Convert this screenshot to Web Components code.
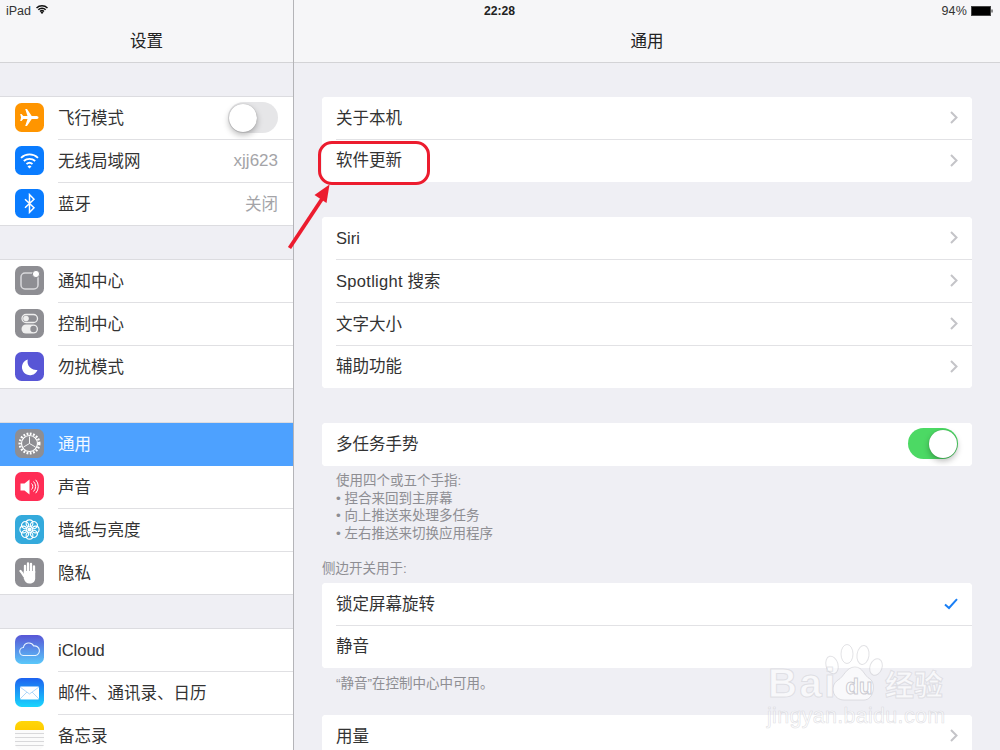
<!DOCTYPE html>
<html lang="zh"><head><meta charset="utf-8"><title>设置</title>
<style>
html,body{margin:0;padding:0;background:#efeff4}
body{width:1000px;height:750px;overflow:hidden;font-family:"Liberation Sans","Noto Sans CJK SC",sans-serif;color:#2b2b2b}
</style></head><body>
<settings-app>
  <nav-pane slot="side" title-text="设置" side>
    <set-group>
      <set-row side><set-icon slot="icon" name="plane"></set-icon>飞行模式<ios-switch slot="end"></ios-switch></set-row>
      <set-row side><set-icon slot="icon" name="wifi"></set-icon>无线局域网<span slot="end" style="font-size:17px">xjj623</span></set-row>
      <set-row side><set-icon slot="icon" name="bt"></set-icon>蓝牙<span slot="end">关闭</span></set-row>
    </set-group>
    <set-group>
      <set-row side><set-icon slot="icon" name="notif"></set-icon>通知中心</set-row>
      <set-row side><set-icon slot="icon" name="control"></set-icon>控制中心</set-row>
      <set-row side><set-icon slot="icon" name="moon"></set-icon>勿扰模式</set-row>
    </set-group>
    <set-group>
      <set-row side selected><set-icon slot="icon" name="gear"></set-icon>通用</set-row>
      <set-row side><set-icon slot="icon" name="sound"></set-icon>声音</set-row>
      <set-row side><set-icon slot="icon" name="flower"></set-icon>墙纸与亮度</set-row>
      <set-row side><set-icon slot="icon" name="hand"></set-icon>隐私</set-row>
    </set-group>
    <set-group>
      <set-row side><set-icon slot="icon" name="cloud"></set-icon>iCloud</set-row>
      <set-row side><set-icon slot="icon" name="mail"></set-icon>邮件、通讯录、日历</set-row>
      <set-row side><set-icon slot="icon" name="notes"></set-icon>备忘录</set-row>
    </set-group>
  </nav-pane>
  <nav-pane slot="main" title-text="通用">
    <set-card>
      <set-row chevron>关于本机</set-row>
      <set-row chevron>软件更新</set-row>
    </set-card>
    <set-card>
      <set-row chevron>Siri</set-row>
      <set-row chevron><span style="letter-spacing:.3px">Spotlight</span> 搜索</set-row>
      <set-row chevron>文字大小</set-row>
      <set-row chevron>辅助功能</set-row>
    </set-card>
    <set-card>
      <set-row>多任务手势<ios-switch slot="end" on></ios-switch></set-row>
    </set-card>
    <set-note>使用四个或五个手指:<br>• 捏合来回到主屏幕<br>• 向上推送来处理多任务<br>• 左右推送来切换应用程序</set-note>
    <set-note header>侧边开关用于:</set-note>
    <set-card>
      <set-row>锁定屏幕旋转<svg slot="end" width="14" height="12" viewBox="0 0 14 12" style="display:block"><path d="M1 6.500 L5 10 L13 1.200" fill="none" stroke="#1a7ff5" stroke-width="2"/></svg></set-row>
      <set-row>静音</set-row>
    </set-card>
    <set-note class="foot">“静音”在控制中心中可用。</set-note>
    <set-card tail>
      <set-row chevron>用量</set-row>
    </set-card>
  </nav-pane>
</settings-app>
<script>
const def=(n,html,init)=>{customElements.define(n,class extends HTMLElement{
  constructor(){super();this.attachShadow({mode:'open'}).innerHTML=typeof html==='function'?html(this):html;}
  connectedCallback(){init&&init(this)}
})};
def('settings-app',`<style>
:host{display:block;position:relative;width:1000px;height:750px;overflow:hidden}
.wrap{display:grid;grid-template-columns:294px 706px;height:750px}
</style>
<div class="wrap"><slot name="side"></slot><slot name="main"></slot></div>
<status-bar></status-bar><red-annotation></red-annotation><baidu-mark></baidu-mark>`);
def('status-bar',`<style>
:host{position:absolute;left:0;top:0;width:1000px;height:21px;display:grid;grid-template-columns:1fr auto 1fr;align-items:center;box-sizing:border-box;padding:0 7px 0 6px;font:12.500px "Liberation Sans",sans-serif;color:#333}
.l,.r{display:flex;align-items:center}.l{gap:5px}.r{justify-content:flex-end;gap:4px}
b{font-weight:700;color:#222;font-size:12.200px}
.r span{letter-spacing:.2px}
.l svg{position:relative;top:-1px}
</style>
<div class="l"><span>iPad</span><svg width="12" height="9" viewBox="0 0 12 9"><path d="M.5 3A8 8 0 0 1 11.500 3M2.300 4.800a5.500 5.500 0 0 1 7.400 0M4 6.500a3 3 0 0 1 4 0" fill="none" stroke="#111" stroke-width="1.500"/><path d="M6 9 4.500 7.600a2 2 0 0 1 3 0z" fill="#111"/></svg></div>
<b>22:28</b>
<div class="r"><span>94%</span><svg width="22" height="10" viewBox="0 0 22 10"><rect x=".5" y=".5" width="19" height="9" fill="none" stroke="#444"/><rect x="1" y="1" width="18" height="8" fill="#000"/><path d="M20.500 3.500h1v3h-1z" fill="#222"/></svg></div>`);
def('nav-pane',h=>`<style>
:host{display:block;height:750px;overflow:hidden;background:#efeff4}
:host([side]){border-right:1px solid #b4b4b8;box-sizing:border-box;width:294px}
header{height:63px;box-sizing:border-box;border-bottom:1px solid #d3d3d6;background:#f6f6f8;padding:20px 0 2px;display:flex;align-items:center;justify-content:center;font:16.500px "Noto Sans CJK SC",sans-serif;color:#222}
.b{display:flex;flex-direction:column;gap:33px;padding-top:33px}
:host(:not([side])) .b{display:block;padding:34px 28px 0}
</style><header>${h.getAttribute('title-text')}</header><div class="b"><slot></slot></div>`);
def('set-group',`<style>:host{display:block;background:#fff;border-top:1px solid #dcdce0}</style><slot></slot>`);
def('set-card',`<style>:host{display:block;background:#fff;border-radius:4px;overflow:hidden;margin-bottom:35px}
::slotted(set-row:last-child){height:42px}
::slotted(set-row:first-child:last-child){height:43px}
</style><slot></slot>`);
def('set-row',h=>`<style>
:host{display:flex;align-items:center;height:43px;box-sizing:border-box;position:relative;padding:0 14px 2px;background:#fff;font:16.500px/20px "Liberation Sans","Noto Sans CJK SC",sans-serif;color:#333}
:host([side]){padding:0 15px 2px}
:host([selected]){background:#4da1ff;color:#f4f9ff}
:host::after{content:"";position:absolute;left:14px;right:0;bottom:0;height:1px;background:#e2e2e5}
:host([side])::after{left:58px;background:#e0e0e3}
:host(:last-child)::after{display:none}
:host([side]:last-child)::after{display:block;left:0;background:#dcdce0}
:host([selected])::after{display:none}
.ic{display:flex;margin-right:14px}
:host(:not([side])) .ic{display:none}
.lab{flex:1;white-space:nowrap}
.e{color:#a4a4a8;display:flex;align-items:center}
svg.ch{display:${h.hasAttribute('chevron')?'block':'none'}}
</style><div class="ic"><slot name="icon"></slot></div><div class="lab"><slot></slot></div><div class="e"><slot name="end"></slot></div>
<svg class="ch" width="8" height="13" viewBox="0 0 8 13"><path d="M1 1l5.500 5.500L1 12" fill="none" stroke="#c4c4c8" stroke-width="2"/></svg>`);
def('set-note',h=>`<style>
:host{display:block;font:13.500px/17.600px "Liberation Sans","Noto Sans CJK SC",sans-serif;color:#8e8e93;padding:0 14px;margin:-29px 0 27px}
:host(.foot){margin:-28px 0 22px}
:host([header]){padding:0;margin:-9px 0 5.500px}
</style><slot></slot>`);
def('ios-switch',h=>`<style>
:host{display:block;width:50px;height:31px;border-radius:16px;position:relative;background:${h.hasAttribute('on')?'#4cd964':'#e6e6e8'}}
i{position:absolute;top:1.500px;width:28px;height:28px;border-radius:50%;background:#fff;box-shadow:0 3px 6px rgba(0,0,0,.28),0 0 1px rgba(0,0,0,.3);${h.hasAttribute('on')?'right:1px':'left:1px'}}
</style><i></i>`);
const I={
plane:['#ff9500',`<path d="M23.500 14.500c0-1-1.200-1.500-2.500-1.500h-4.300L12 6h-1.800l2.300 7H8.300L6.500 11H5.200l.9 3.500-.9 3.500h1.300l1.800-2h4.200l-2.300 7H12l4.700-7H21c1.300 0 2.500-.5 2.500-1.500z" fill="#fff"/>`],
wifi:['#0a7cff',`<path d="M6 11.800a12.500 12.500 0 0 1 17 0M8.800 15a8.500 8.500 0 0 1 11.400 0M11.500 18a4.600 4.600 0 0 1 6 0" fill="none" stroke="#fff" stroke-width="1.800"/><path d="M14.500 22.500l-2-2a3 3 0 0 1 4 0z" fill="#fff"/>`],
bt:['#0a7cff',`<path d="M10 10.200l9 8.600-4.500 4.700V5.500L19 10.200l-9 8.600" fill="none" stroke="#fff" stroke-width="1.500"/>`],
notif:['#8e8e93',`<rect x="6" y="7" width="17" height="16" rx="4" fill="none" stroke="#d9d9dc" stroke-width="1.500"/><circle cx="21" cy="8" r="3.600" fill="#fff" stroke="#8e8e93" stroke-width="1"/>`],
control:['#8e8e93',`<rect x="7" y="5.500" width="15.500" height="8" rx="4" fill="none" stroke="#eee" stroke-width="1.300"/><circle cx="11" cy="9.500" r="2.800" fill="#eee"/><rect x="6.500" y="15.500" width="16.500" height="9" rx="4.500" fill="#eee"/><circle cx="18.500" cy="20" r="3.200" fill="#8e8e93"/>`],
moon:['#5856d6',`<path d="M12.800 7.500a8 8 0 1 0 9.700 10.400A8.500 8.500 0 0 1 12.800 7.500z" fill="#fff"/>`],
gear:['#8e8e93',`<circle cx="14.500" cy="14.500" r="9.800" fill="none" stroke="#fff" stroke-width="2.400" stroke-dasharray="1.800 1.500"/><circle cx="14.500" cy="14.500" r="8" fill="none" stroke="#fff" stroke-width="1.200"/><path d="M14.500 14.500V7.500M14.500 14.500L8.500 18M14.500 14.500L20.500 18" stroke="#fff" stroke-width=".9"/>`],
sound:['#ff2d55',`<path d="M5.500 11.500h4l5-4v15l-5-4h-4z" fill="#fff"/><path d="M16.500 11.500a4 4 0 0 1 0 6M18.500 9.500a7 7 0 0 1 0 10M20.700 7.800a10 10 0 0 1 0 13.400" fill="none" stroke="#fff" stroke-width="1"/>`],
flower:['#34aadc',`<g fill="none" stroke="#fff" stroke-width="1.100">${[0,45,90,135,180,225,270,315].map(a=>`<circle cx="14.500" cy="8.300" r="3.400" transform="rotate(${a} 14.500 14.500)"/>`).join('')}</g><circle cx="14.500" cy="14.500" r="2" fill="#fff"/>`],
hand:['#8e8e93',`<path d="M9 18c-1.500-2.500-2.500-4-3.500-5" fill="none" stroke="#fff" stroke-width="2.400" stroke-linecap="round"/><path d="M10 15V8M13 14V5.500M16 14V6M19 15V8.500" stroke="#fff" stroke-width="2.300" stroke-linecap="round"/><path d="M8.800 13h11.400v7.500c0 3-2.500 5-5.700 5s-4.500-1.500-5.700-5z" fill="#fff"/>`],
cloud:['linear-gradient(#5856d6,#5ac8fa)',`<path d="M9 20.500a4 4 0 0 1-.6-8 5.500 5.500 0 0 1 10.300-1.500 4.800 4.800 0 0 1 1.800 9.500z" fill="none" stroke="#e8f4ff" stroke-width="1.100"/>`],
mail:['linear-gradient(#1d62f0,#1ad6fd)',`<rect x="5" y="8.500" width="19" height="13" rx="1" fill="#fff"/><path d="M5 9l9.500 7 9.500-7M5 21l7-7M24 21l-7-7" fill="none" stroke="#9ccdf8" stroke-width=".8"/>`],
notes:['linear-gradient(#ffd60a 0,#ffcc00 9px,#fbfbfb 9px)',`<path d="M0 12.500h29M0 16.500h29M0 20.500h29M0 24.500h29" stroke="#d8d8da" stroke-width="1"/>`]
};
def('set-icon',h=>{const [bg,p]=I[h.getAttribute('name')];return `<style>
:host{display:block;width:29px;height:29px;border-radius:6.500px;overflow:hidden;background:${bg}}
svg{display:block}</style><svg width="29" height="29" viewBox="0 0 29 29">${p}</svg>`});
def('red-annotation',`<style>
:host{position:absolute;left:0;top:0;width:1000px;height:750px;pointer-events:none}
.box{position:absolute;left:318px;top:141px;width:112px;height:44px;box-sizing:border-box;border:3px solid #ec1c2e;border-radius:14px}
svg{position:absolute;left:280px;top:180px}
</style><div class="box"></div>
<svg width="60" height="75" viewBox="0 0 60 75"><path d="M9.500 68L42 19" stroke="#ec1c2e" stroke-width="3.800" fill="none"/><path d="M49.500 4.500L34.500 15 46.500 23z" fill="#ec1c2e"/></svg>`);
def('baidu-mark',`<style>
:host{position:absolute;left:766px;top:643px;width:182px;height:84px;pointer-events:none;font-family:"Liberation Sans","Noto Sans CJK SC",sans-serif;color:rgba(255,255,255,.6);-webkit-text-stroke:1px rgba(190,190,198,.4)}
.top{position:absolute;left:2px;top:20px;display:flex;align-items:center;white-space:nowrap}
.bai{font:700 40px/40px "Liberation Sans",sans-serif;letter-spacing:2.500px;width:62px}
.du{font:700 22px/40px "Liberation Sans",sans-serif;margin-left:5px;width:48px;text-align:center;position:relative;top:4px;-webkit-text-stroke:1px rgba(170,170,180,.6)}
.jy{font:700 29px/40px "Noto Sans CJK SC",sans-serif;margin-left:2px}
svg{position:absolute;left:58px;top:0}
.url{position:absolute;left:1px;top:61px;font:21.500px/24px "Liberation Sans",sans-serif;white-space:nowrap;letter-spacing:.3px;-webkit-text-stroke:.7px rgba(190,190,198,.45)}
</style>
<svg width="60" height="60" viewBox="0 0 60 60"><g fill="rgba(255,255,255,.6)" stroke="rgba(190,190,198,.45)"><ellipse cx="8" cy="22" rx="6" ry="9" transform="rotate(-15 8 22)"/><ellipse cx="23" cy="11" rx="6" ry="9.500"/><ellipse cx="39" cy="12" rx="6" ry="9.500" transform="rotate(8 39 12)"/><ellipse cx="52" cy="24" rx="6" ry="8.500" transform="rotate(20 52 24)"/><path d="M31 24c8 0 9 9 15 12 6 4 4 21-6 21H20C9 57 5 43 14 37c6-3 8-13 17-13z"/></g></svg>
<div class="top"><span class="bai">Bai</span><span class="du">du</span><span class="jy">经验</span></div>
<div class="url">jingyan.baidu.com</div>`);
</script>
</body></html>
